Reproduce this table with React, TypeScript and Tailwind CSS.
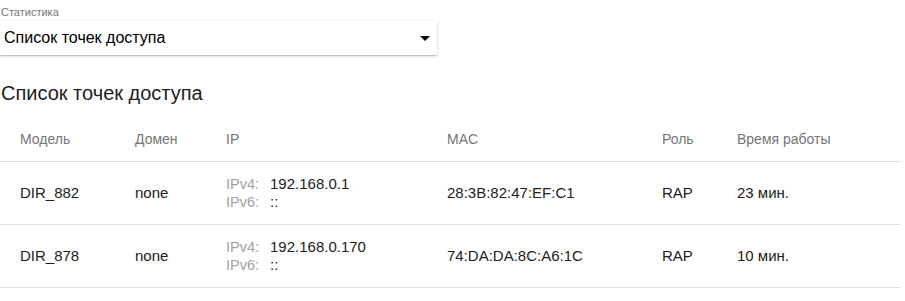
import React from 'react';

const rows = [
  { model: 'DIR_882', domain: 'none', ipv4: '192.168.0.1', ipv6: '::', mac: '28:3B:82:47:EF:C1', role: 'RAP', uptime: '23 мин.' },
  { model: 'DIR_878', domain: 'none', ipv4: '192.168.0.170', ipv6: '::', mac: '74:DA:DA:8C:A6:1C', role: 'RAP', uptime: '10 мин.' },
];

const cols = 'grid grid-cols-[135px_91px_221px_215px_75px_1fr]';

export default function App() {
  return (
    <div className="w-[905px] h-[301px] bg-white text-[#212121] font-['Liberation_Sans',Arial,sans-serif]">
      {/* Select */}
      <div className="pt-[6px] pl-[1px] text-[11px] leading-[13px] text-[#757575]">Статистика</div>
      <div className="mt-[2px] w-[437px] h-[34px] bg-white shadow-[0_1px_3px_rgba(0,0,0,0.2),0_1px_1px_rgba(0,0,0,0.12)] flex items-center justify-between pl-[4px] pr-[6px]">
        <span className="text-[16px] text-black">Список точек доступа</span>
        <svg width="10" height="5" viewBox="0 0 10 5" className="mr-[1px]">
          <path d="M0 0 L10 0 L5 5 Z" fill="#000" />
        </svg>
      </div>

      <h2 className="mt-[24px] pl-[1px] text-[20px] leading-[28px] text-[#212121]">Список точек доступа</h2>

      {/* Table */}
      <div className="mt-[11px] w-[901px] text-[15px]">
        <div className={`${cols} h-[44px] items-center text-[14px] text-[#757575] border-b border-[#e0e0e0]`}>
          <div className="pl-[20px]">Модель</div>
          <div>Домен</div>
          <div>IP</div>
          <div>MAC</div>
          <div>Роль</div>
          <div>Время работы</div>
        </div>
        {rows.map((r) => (
          <div key={r.model} className={`${cols} h-[63px] items-center border-b border-[#e0e0e0]`}>
            <div className="pl-[20px]">{r.model}</div>
            <div>{r.domain}</div>
            <div className="leading-[18px]">
              <div className="flex items-baseline"><span className="w-[44px] text-[14.5px] text-[#a0a0a0]">IPv4:</span><span>{r.ipv4}</span></div>
              <div className="flex items-baseline"><span className="w-[44px] text-[14.5px] text-[#a0a0a0]">IPv6:</span><span>{r.ipv6}</span></div>
            </div>
            <div>{r.mac}</div>
            <div>{r.role}</div>
            <div>{r.uptime}</div>
          </div>
        ))}
      </div>
    </div>
  );
}
